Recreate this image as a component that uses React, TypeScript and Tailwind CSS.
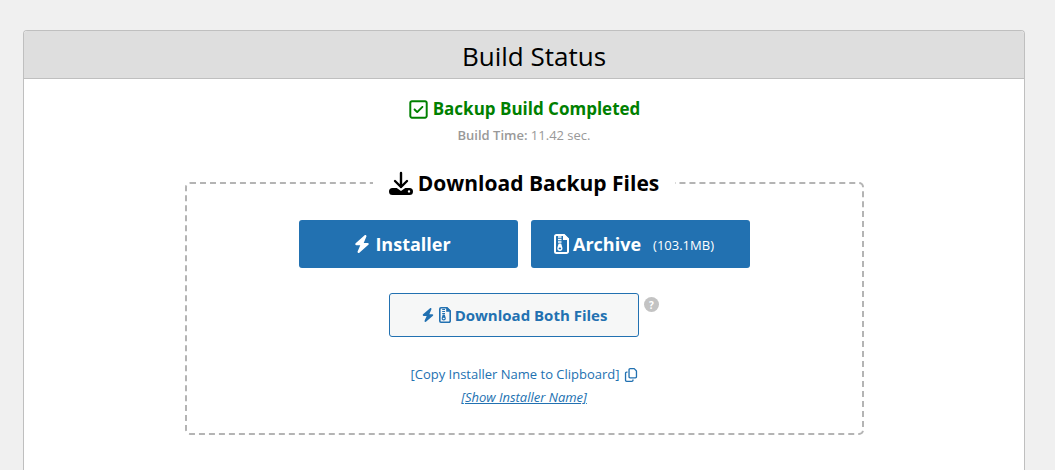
import type { ReactNode } from "react";
import { FaBolt, FaRegCopy, FaRegSquareCheck } from "react-icons/fa6";

const DownloadIcon = () => (
  <svg viewBox="0 0 24 24" className="h-6 w-6 shrink-0" aria-hidden="true">
    <path
      d="M12 2v14M6 10l6 6 6-6"
      fill="none"
      stroke="currentColor"
      strokeWidth="2.400"
      strokeLinecap="round"
      strokeLinejoin="round"
    />
    <path
      fillRule="evenodd"
      fill="currentColor"
      d="M3.500 17h4.200L12 20l4.300-3h4.200a3.500 3.500 0 0 1 0 7h-17a3.500 3.500 0 0 1 0-7Zm16.500 2.200a1.200 1.200 0 1 0 0 2.400 1.200 1.200 0 0 0 0-2.400Z"
    />
  </svg>
);

const ZipIcon = ({ size }: { size: number }) => (
  <svg viewBox="0 0 15 20" height={size} width={size * 0.75} className="shrink-0" aria-hidden="true">
    <path
      d="M2.500 1H10l4 4v12.500a1.500 1.500 0 0 1-1.500 1.500h-10A1.500 1.500 0 0 1 1 17.500v-15A1.500 1.500 0 0 1 2.500 1Z"
      fill="none"
      stroke="currentColor"
      strokeWidth="2"
    />
    <path d="M9 1v5h5.500V4.500L10.500.5Z" fill="currentColor" />
    <path d="M4 3h3.500M4 5.500h3.500M4 8h3.500" stroke="currentColor" strokeWidth="1.300" />
    <path
      fillRule="evenodd"
      fill="currentColor"
      d="M4.600 9.500h2.600l1.200 4.200a2.600 2.600 0 1 1-5 0Zm1.300 4a1.300.9 0 1 0 0 1.800 1.300.9 0 0 0 0-1.800Z"
    />
  </svg>
);

interface DownloadButtonProps {
  icon: ReactNode;
  label: string;
  size?: string;
}

const DownloadButton = ({ icon, label, size }: DownloadButtonProps) => (
  <button
    type="button"
    className="flex h-12 w-[219px] items-center justify-center gap-1 rounded-[3px] bg-[#2271b1] pr-3 text-white hover:bg-[#135e96]"
  >
    {icon}
    <span className="text-[18px] font-bold">{label}</span>
    {size && <span className="ml-2 pt-1 text-[13px]">({size})</span>}
  </button>
);

export default function App() {
  return (
    <div className="flex min-h-screen flex-col bg-[#f0f0f0] pl-[23px] pr-[30px] pt-[30px] font-['Open_Sans',sans-serif]">
      <section className="flex flex-1 flex-col items-center rounded-t-[4px] border border-b-0 border-[#bfbfbf] bg-white pb-6">
        <header className="w-full rounded-t-[3px] border-b border-[#bfbfbf] bg-[#dedede] pl-5 pt-[3px]">
          <h1 className="text-center text-[26px] font-medium leading-[44px] text-black">Build Status</h1>
        </header>

        <div className="mt-[18px] flex items-center gap-1 text-[#008000]">
          <FaRegSquareCheck size={21} />
          <h2 className="text-[17px] font-bold leading-6">Backup Build Completed</h2>
        </div>
        <p className="mt-1 text-[13px] leading-5 text-[#999999]">
          <b className="font-semibold">Build Time:</b> 11.42 sec.
        </p>

        <fieldset className="mt-[22px] flex w-full max-w-[679px] flex-col items-center rounded-[5px] border-2 border-dashed border-[#b4b4b4] pb-6">
          <legend className="mx-auto px-4">
            <span className="flex items-center gap-[5px] text-[21px] font-bold leading-8 text-black">
              <DownloadIcon />
              Download Backup Files
            </span>
          </legend>

          <div className="mt-[21px] flex gap-[13px]">
            <DownloadButton icon={<FaBolt size={18} />} label="Installer" />
            <DownloadButton icon={<ZipIcon size={20} />} label="Archive" size="103.1MB" />
          </div>

          <div className="mt-[25px] flex items-start gap-[5px]">
            <button
              type="button"
              className="flex h-11 w-[250px] items-center justify-center gap-1 rounded-[3px] border border-[#2271b1] bg-[#f6f7f7] text-[#2271b1]"
            >
              <FaBolt size={14} />
              <ZipIcon size={16} />
              <span className="text-[15px] font-bold">Download Both Files</span>
            </button>
            <button
              type="button"
              aria-label="Help"
              className="mt-1 flex h-[15px] w-[15px] items-center justify-center rounded-full bg-[#c3c3c3] text-[10px] font-bold leading-none text-white"
            >
              ?
            </button>
          </div>

          <button type="button" className="mt-[26px] flex items-center gap-1 text-[13px] leading-[23px] text-[#2271b1]">
            [Copy Installer Name to Clipboard]
            <FaRegCopy size={14} />
          </button>
          <a href="#installer-name" className="text-[13px] italic leading-[23px] text-[#2271b1] underline">
            [Show Installer Name]
          </a>
        </fieldset>
      </section>
    </div>
  );
}
